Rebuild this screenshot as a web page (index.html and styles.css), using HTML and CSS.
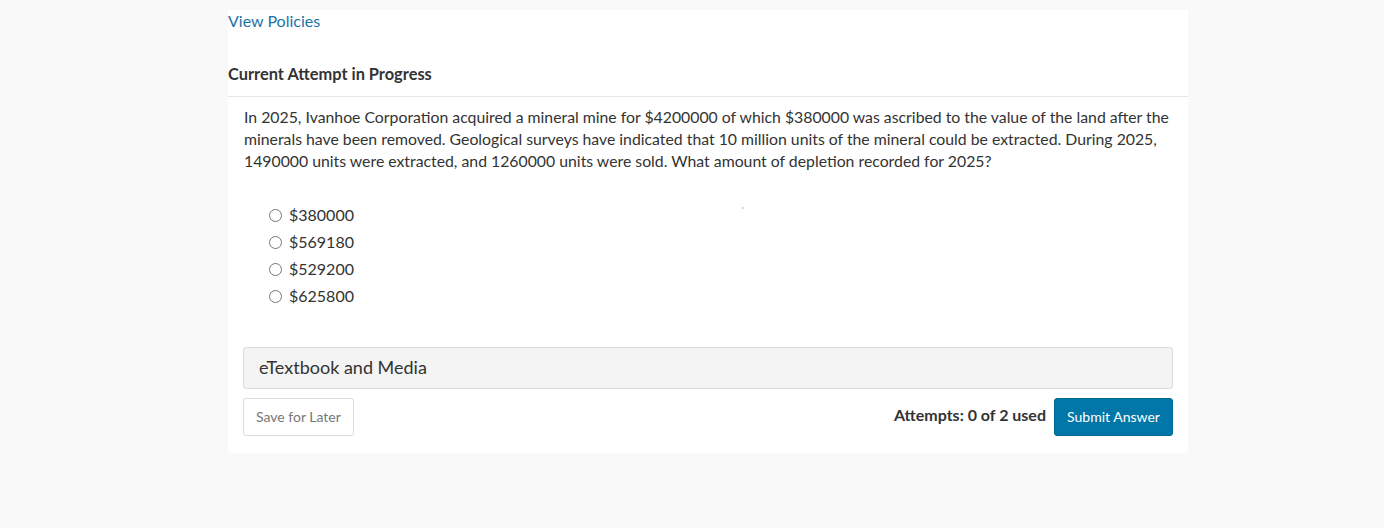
FILE: index.html
```html
<!DOCTYPE html>
<html lang="en">
<head>
<meta charset="utf-8">
<title>Current Attempt in Progress</title>
<link rel="stylesheet" href="styles.css">
</head>
<body>
<main class="card">
  <div class="policies"><a href="#" class="link">View Policies</a></div>
  <h2 class="heading">Current Attempt in Progress</h2>
  <section class="question">
    <p class="prompt">In 2025, Ivanhoe Corporation acquired a mineral mine for $4200000 of which $380000 was ascribed to the value of the land after the minerals have been removed. Geological surveys have indicated that 10 million units of the mineral could be extracted. During 2025, 1490000 units were extracted, and 1260000 units were sold. What amount of depletion recorded for 2025?</p>
    <span class="speck"></span>
    <ul class="options">
      <li class="option"><span class="radio"></span><span>$380000</span></li>
      <li class="option"><span class="radio"></span><span>$569180</span></li>
      <li class="option"><span class="radio"></span><span>$529200</span></li>
      <li class="option"><span class="radio"></span><span>$625800</span></li>
    </ul>
  </section>
  <div class="media">eTextbook and Media</div>
  <div class="footer">
    <button class="btn-save">Save for Later</button>
    <div class="actions">
      <span class="attempts">Attempts: 0 of 2 used</span>
      <button class="btn-submit">Submit Answer</button>
    </div>
  </div>
</main>
</body>
</html>
```
FILE: styles.css
```css
html, body {
  margin: 0;
  padding: 0;
  background: #f9f9f9;
}
body {
  font-family: Lato, "Open Sans", sans-serif;
  color: #333;
  padding-top: 10px;
}
.card {
  background: #fff;
  width: 960px;
  margin-left: 228px;
  padding-bottom: 17px;
}
.policies {
  font-size: 16px;
  line-height: 22px;
}
.link {
  color: #1a73a8;
  text-decoration: none;
}
.heading {
  margin: 31px 0 0;
  font-size: 16.4px;
  line-height: 22px;
  font-weight: 700;
  color: #333;
  padding-bottom: 11px;
  border-bottom: 1px solid #e6e6e6;
}
.question {
  position: relative;
  padding: 9px 16px 0;
}
.prompt {
  margin: 0;
  font-size: 15.8px;
  line-height: 22px;
  color: #333;
}
.speck {
  position: absolute;
  left: 514px;
  top: 110px;
  width: 2px;
  height: 2px;
  background: #c8c8c8;
  border-radius: 1px;
}
.options {
  list-style: none;
  margin: 29px 0 0;
  padding: 0 0 0 25px;
}
.option {
  display: flex;
  align-items: center;
  height: 27px;
  font-size: 16px;
  color: #333;
}
.radio {
  width: 11px;
  height: 11px;
  border: 1px solid #767676;
  border-radius: 50%;
  margin-right: 7px;
  margin-top: 1px;
  box-sizing: content-box;
}
.media {
  margin: 38px 15px 0;
  height: 40px;
  line-height: 38px;
  background: #f4f4f4;
  border: 1px solid #dcdcdc;
  border-radius: 3px;
  padding-left: 15px;
  font-size: 18px;
  color: #333;
}
.footer {
  display: flex;
  justify-content: space-between;
  align-items: center;
  margin: 9px 15px 0;
}
.btn-save {
  font-family: inherit;
  height: 38px;
  padding: 0 12px 2px;
  background: #fff;
  border: 1px solid #dcdcdc;
  border-radius: 3px;
  font-size: 14px;
  color: #777;
}
.actions {
  display: flex;
  align-items: center;
  gap: 8px;
}
.attempts {
  font-size: 16px;
  font-weight: 700;
  color: #333;
  margin-top: -6px;
}
.btn-submit {
  font-family: inherit;
  height: 38px;
  width: 119px;
  padding: 0 0 2px;
  background: #0077a8;
  border: 1px solid #006a96;
  border-radius: 3px;
  font-size: 14px;
  color: #fff;
}
```
